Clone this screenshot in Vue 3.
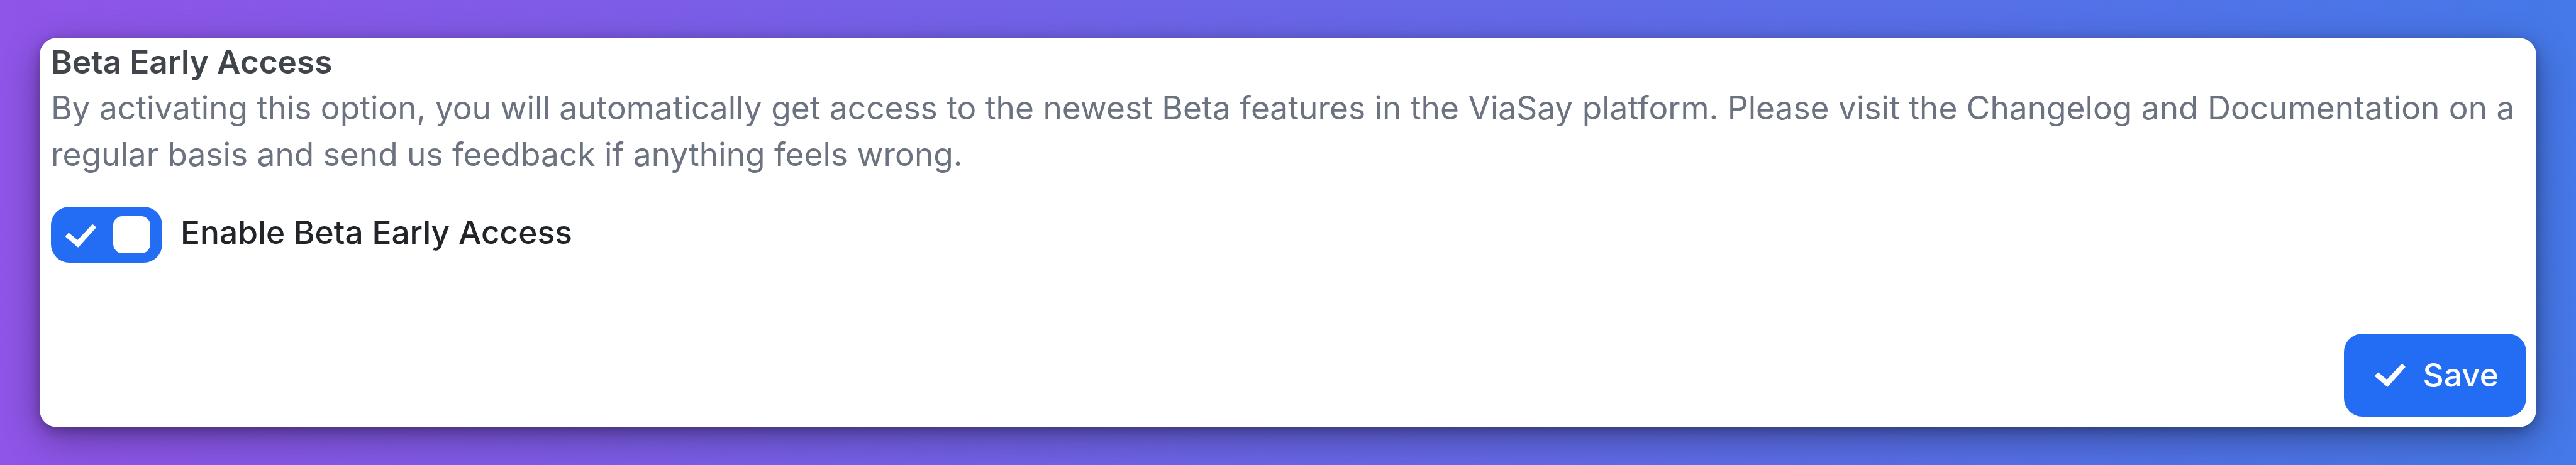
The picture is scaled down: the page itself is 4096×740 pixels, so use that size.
<template>
  <div class="page">
    <section class="card">
      <div class="card__intro">
        <h2 class="card__title">Beta Early Access</h2>
        <p class="card__text">
          By activating this option, you will automatically get access to the newest Beta features in the ViaSay platform. Please visit the Changelog and Documentation on a regular basis and send us feedback if anything feels wrong.
        </p>
      </div>

      <div class="option">
        <button
          class="toggle"
          :class="{ 'toggle--on': enabled }"
          type="button"
          role="switch"
          :aria-checked="enabled"
          @click="enabled = !enabled"
        >
          <svg class="check toggle__check" viewBox="0 0 48.7 37">
            <path :d="checkPath" />
          </svg>
          <span class="toggle__knob"></span>
        </button>
        <span class="option__label">Enable Beta Early Access</span>
      </div>

      <div class="card__footer">
        <button class="save-button" type="button">
          <svg class="check" viewBox="0 0 48.7 37">
            <path :d="checkPath" />
          </svg>
          <span>Save</span>
        </button>
      </div>
    </section>
  </div>
</template>

<script setup>
import { ref } from 'vue';

const enabled = ref(true);

const checkPath = 'M1.7 19 L5.4 15.4 L19.4 27 L43.2 1.7 L47 5 L20 35 Z';
</script>

<style>
body {
  margin: 0;
}
</style>

<style scoped>
.page {
  box-sizing: border-box;
  width: 4096px;
  height: 740px;
  padding: 59.65px 62.6px 60px;
  overflow: hidden;
  background: linear-gradient(90deg, #8f54e8 0%, #4578e8 100%);
  font-family: Inter, sans-serif;
  font-size: 51.42px;
  line-height: 73.57px;
}

.card {
  box-sizing: border-box;
  display: flex;
  flex-direction: column;
  height: 620.35px;
  padding: 2.2px 16.6px 16.6px 18.4px;
  border-radius: 28px;
  background: #ffffff;
  box-shadow: 0 18px 60px rgba(0, 0, 0, 0.33), 0 6px 18px rgba(0, 0, 0, 0.25);
}

.card__title,
.card__text {
  margin: 0;
  font-size: inherit;
}

.card__title {
  color: #40444b;
  font-weight: 600;
}

.card__text {
  color: #6b7280;
}

.option {
  display: flex;
  align-items: flex-start;
  gap: 29.5px;
  margin-top: 46.9px;
}

.option__label {
  margin-top: 4px;
  color: #212529;
  font-weight: 500;
}

/* Toggle */
.toggle {
  box-sizing: border-box;
  display: flex;
  align-items: center;
  justify-content: space-between;
  width: 176.6px;
  height: 88.3px;
  padding: 0 18.4px 0 23.5px;
  border: none;
  border-radius: 29.4px;
  background: #9ca3af;
  cursor: pointer;
}

.toggle--on {
  background: #236df5;
}

.toggle__knob {
  width: 58.9px;
  height: 58.9px;
  border-radius: 14.7px;
  background: #ffffff;
}

.check {
  display: block;
  width: 48.7px;
  height: 37px;
  fill: #ffffff;
  stroke: #ffffff;
  stroke-width: 3;
  stroke-linejoin: round;
}

.toggle__check {
  margin-top: 3.4px;
}

/* Footer */
.card__footer {
  display: flex;
  justify-content: flex-end;
  margin-top: auto;
}

.save-button {
  box-sizing: border-box;
  display: flex;
  align-items: center;
  gap: 28px;
  width: 290px;
  height: 132.4px;
  padding: 0 0 0 49px;
  border: none;
  border-radius: 29.4px;
  background: #236df5;
  color: #ffffff;
  font: inherit;
  font-weight: 500;
  cursor: pointer;
}
</style>
